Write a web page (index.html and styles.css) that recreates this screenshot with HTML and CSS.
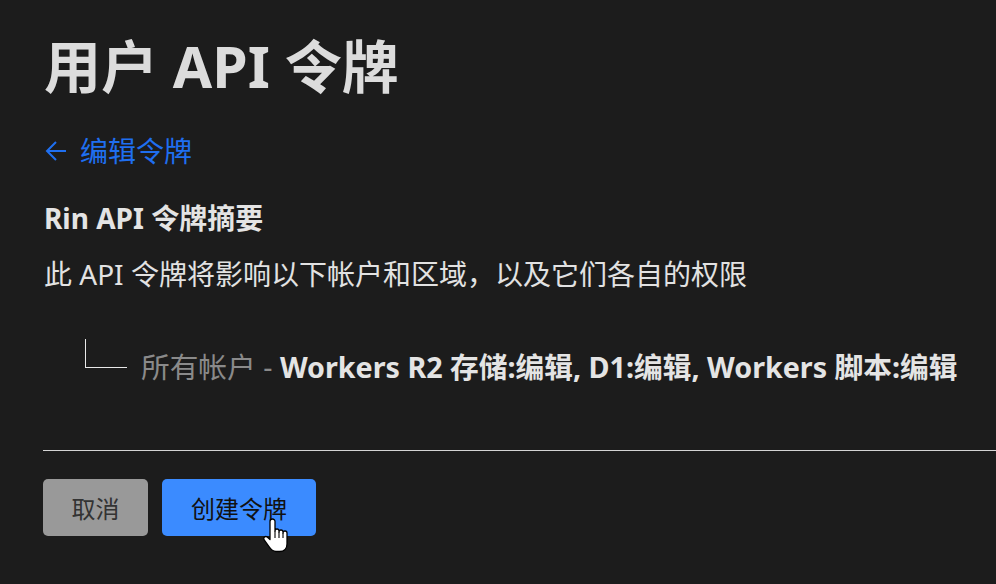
FILE: index.html
```html
<!DOCTYPE html>
<html lang="zh-CN">
<head>
<meta charset="utf-8">
<title>用户 API 令牌</title>
<link rel="stylesheet" href="styles.css">
</head>
<body>
<main class="page">
  <h1 class="title">用户 API 令牌</h1>
  <a class="back" href="#"><svg class="arrow" width="22" height="22" viewBox="0 0 22 22" aria-hidden="true"><path d="M21 11H2M11 2L2 11l9 9" fill="none" stroke="currentColor" stroke-width="2"/></svg>编辑令牌</a>
  <h2 class="summary-title">Rin API 令牌摘要</h2>
  <p class="summary-desc">此 API 令牌将影响以下帐户和区域，以及它们各自的权限</p>
  <div class="tree-row">
    <span class="tree-line"></span>
    <span class="tree-text"><span class="muted">所有帐户 - </span><strong>Workers R2 存储:编辑, D1:编辑, Workers 脚本:编辑</strong></span>
  </div>
  <hr class="divider">
  <div class="actions">
    <button class="btn btn-cancel">取消</button>
    <button class="btn btn-create">创建令牌
      <svg class="cursor" width="30" height="38" viewBox="0 0 30 38" aria-hidden="true">
        <path d="M8 4.5a2.5 2.5 0 0 1 5 0V14a2 2 0 0 1 4 0v1a2 2 0 0 1 4 0v1a2 2 0 0 1 4 0V27c0 4.5-3 7.5-7.5 7.5h-3.5c-3 0-5-1.8-7-4.8l-5-7a2.1 2.1 0 0 1 3.2-2.6L8 22.5z" fill="#fff" stroke="#000" stroke-width="1.3" stroke-linejoin="round"/>
        <path d="M13 14v7M17 15v6M21 16v5" stroke="#000" stroke-width="1.1" fill="none"/>
      </svg>
    </button>
  </div>
</main>
</body>
</html>
```
FILE: styles.css
```css
html, body {
  margin: 0;
  padding: 0;
  background: #1c1c1c;
}
body {
  font-family: "Noto Sans", "Noto Sans CJK SC", sans-serif;
  color: #e2e2e2;
  width: 996px;
  height: 584px;
  overflow: hidden;
}
.page {
  padding: 31px 0 0 44px;
  display: flex;
  flex-direction: column;
  align-items: flex-start;
}
.title {
  margin: 0;
  font-size: 57px;
  line-height: 70px;
  font-weight: 700;
  color: #dcdcdc;
}
.back {
  margin-top: 30px;
  display: flex;
  align-items: center;
  gap: 13px;
  font-size: 28px;
  line-height: 40px;
  color: #1f6ff0;
  text-decoration: none;
}
.arrow {
  display: block;
  margin-left: 1px;
}
.summary-title {
  margin: 27px 0 0;
  font-size: 28px;
  line-height: 40px;
  font-weight: 700;
  color: #e4e4e4;
}
.summary-desc {
  margin: 16px 0 0;
  font-size: 28px;
  line-height: 40px;
  color: #e2e2e2;
}
.tree-row {
  display: flex;
  align-items: flex-start;
  margin: 45px 0 0 41px;
}
.tree-line {
  width: 41px;
  height: 28px;
  border-left: 1px solid #e8e8e8;
  border-bottom: 1px solid #e8e8e8;
  margin-right: 14px;
}
.tree-text {
  margin-top: 8px;
  font-size: 28.7px;
  line-height: 40px;
}
.muted {
  color: #8a8a8a;
}
.tree-text strong {
  color: #e4e4e4;
  font-weight: 700;
}
.divider {
  align-self: stretch;
  margin: 63px 0 0 -1px;
  border: 0;
  border-top: 1px solid #d4d4d4;
  height: 0;
}
.actions {
  display: flex;
  gap: 14px;
  margin: 28px 0 0 -1px;
}
.btn {
  height: 57px;
  border: 0;
  border-radius: 5px;
  font-family: "Noto Sans", "Noto Sans CJK SC", sans-serif;
  font-size: 24px;
  padding: 0;
  position: relative;
}
.btn-cancel {
  width: 105px;
  background: #999999;
  color: #333333;
}
.btn-create {
  width: 154px;
  background: #3b8bff;
  color: #111111;
}
.cursor {
  position: absolute;
  left: 100px;
  top: 38px;
}
```
